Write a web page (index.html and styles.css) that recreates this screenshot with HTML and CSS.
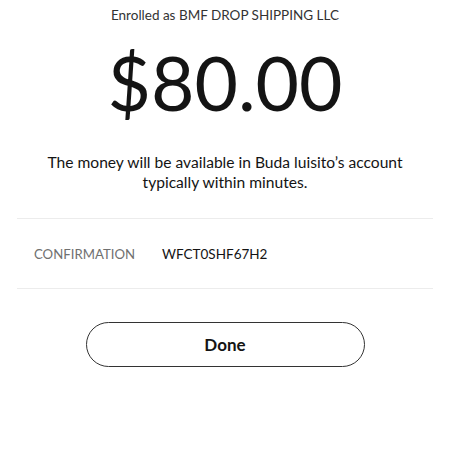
FILE: index.html
```html
<!DOCTYPE html>
<html lang="en">
<head>
    <meta charset="UTF-8">
    <meta name="viewport" content="width=device-width, initial-scale=1.0">
    <title>Transfer sent</title>
    <link rel="stylesheet" href="styles.css">
</head>
<body>
    <div class="screen">
        <p class="enrolled">Enrolled as BMF DROP SHIPPING LLC</p>
        <div class="amount">$80.00</div>
        <p class="message">The money will be available in Buda luisito’s account typically within minutes.</p>

        <div class="details">
            <span class="label">CONFIRMATION</span>
            <span class="value">WFCT0SHF67H2</span>
        </div>

        <div class="actions">
            <button type="button" class="done-btn">Done</button>
        </div>
    </div>
</body>
</html>
```

FILE: styles.css
```css
body {
    margin: 0;
    font-family: Lato, "Open Sans", sans-serif;
    background-color: #fff;
    color: #141414;
}
.screen {
    padding: 0 17px;
}
.enrolled {
    margin: 0;
    padding-top: 5px;
    font-size: 13.5px;
    line-height: 20px;
    text-align: center;
    color: #333;
}
.amount {
    margin-top: 17px;
    font-size: 75px;
    line-height: 80px;
    text-align: center;
    color: #141414;
}
.message {
    margin: 30px 20px 0;
    font-size: 15.6px;
    line-height: 20px;
    text-align: center;
}
.details {
    margin-top: 26px;
    display: flex;
    align-items: center;
    gap: 27px;
    height: 69px;
    padding: 0 17px;
    border-top: 1px solid #ececec;
    border-bottom: 1px solid #ececec;
}
.label {
    font-size: 13.2px;
    color: #707070;
}
.value {
    font-size: 13.5px;
    color: #141414;
}
.actions {
    display: flex;
    justify-content: center;
    padding-top: 33px;
}
.done-btn {
    width: 279px;
    height: 45px;
    border: 1.5px solid #333;
    border-radius: 23px;
    background: #fff;
    font-family: inherit;
    font-size: 17px;
    font-weight: 700;
    color: #141414;
}
```
